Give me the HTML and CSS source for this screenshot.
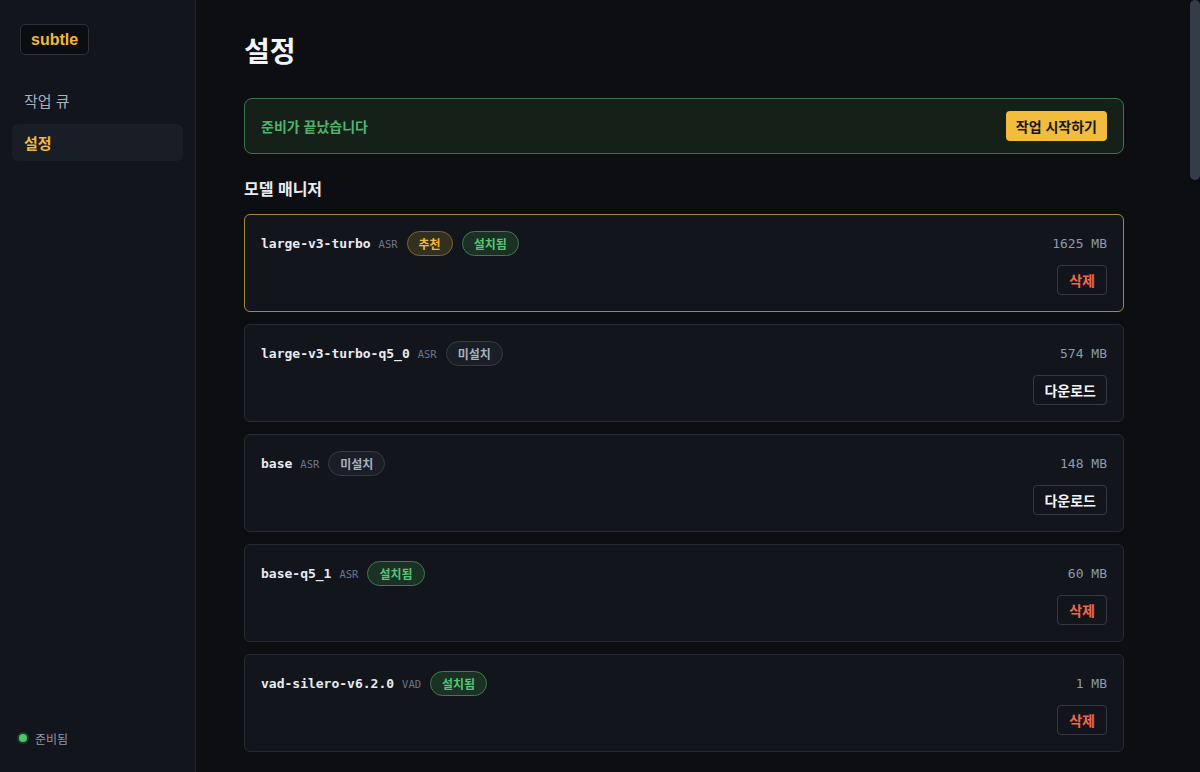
FILE: index.html
```html
<!DOCTYPE html>
<html lang="ko">
<head>
<meta charset="utf-8">
<title>subtle - 설정</title>
<link rel="stylesheet" href="styles.css">
</head>
<body>
<div class="app">
<aside class="sidebar">
  <div class="logo">subtle</div>
  <nav class="nav">
    <a class="nav-item">작업 큐</a>
    <a class="nav-item active">설정</a>
  </nav>
  <div class="status"><span class="dot"></span><span>준비됨</span></div>
</aside>
<main class="main">
  <div class="content">
    <h1 class="title">설정</h1>
    <div class="banner">
      <span class="banner-text">준비가 끝났습니다</span>
      <button class="btn-primary">작업 시작하기</button>
    </div>

    <h2 class="section-title">모델 매니저</h2>
    <div class="cards">
      <div class="card featured">
        <div class="card-left">
          <span class="model-name">large-v3-turbo</span><span class="model-kind">ASR</span>
          <span class="badge rec">추천</span><span class="badge ok">설치됨</span>
        </div>
        <div class="card-right">
          <span class="size">1625 MB</span>
          <button class="btn del">삭제</button>
        </div>
      </div>
      <div class="card">
        <div class="card-left">
          <span class="model-name">large-v3-turbo-q5_0</span><span class="model-kind">ASR</span>
          <span class="badge none">미설치</span>
        </div>
        <div class="card-right">
          <span class="size">574 MB</span>
          <button class="btn dl">다운로드</button>
        </div>
      </div>
      <div class="card">
        <div class="card-left">
          <span class="model-name">base</span><span class="model-kind">ASR</span>
          <span class="badge none">미설치</span>
        </div>
        <div class="card-right">
          <span class="size">148 MB</span>
          <button class="btn dl">다운로드</button>
        </div>
      </div>
      <div class="card">
        <div class="card-left">
          <span class="model-name">base-q5_1</span><span class="model-kind">ASR</span>
          <span class="badge ok">설치됨</span>
        </div>
        <div class="card-right">
          <span class="size">60 MB</span>
          <button class="btn del">삭제</button>
        </div>
      </div>
      <div class="card">
        <div class="card-left">
          <span class="model-name">vad-silero-v6.2.0</span><span class="model-kind">VAD</span>
          <span class="badge ok">설치됨</span>
        </div>
        <div class="card-right">
          <span class="size">1 MB</span>
          <button class="btn del">삭제</button>
        </div>
      </div>
    </div>

    <h2 class="section-title spaced">전사 설정</h2>
    <div class="panel">
      <div class="row"><span class="row-label">언어</span><span class="row-value">자동 감지</span></div>
      <div class="row"><span class="row-label">VAD 사용</span><span class="row-value">켜짐</span></div>
      <div class="row"><span class="row-label">스레드 수</span><span class="row-value">8</span></div>
      <div class="row"><span class="row-label">빔 크기</span><span class="row-value">5</span></div>
    </div>

    <h2 class="section-title spaced">출력 설정</h2>
    <div class="panel">
      <div class="row"><span class="row-label">자막 형식</span><span class="row-value">SRT</span></div>
      <div class="row"><span class="row-label">한 줄 최대 글자 수</span><span class="row-value">42</span></div>
      <div class="row"><span class="row-label">저장 위치</span><span class="row-value">원본과 같은 폴더</span></div>
    </div>

    <h2 class="section-title spaced">정보</h2>
    <div class="panel">
      <div class="row"><span class="row-label">버전</span><span class="row-value">0.4.2</span></div>
      <div class="row"><span class="row-label">엔진</span><span class="row-value">whisper.cpp</span></div>
    </div>
    <div class="spacer"></div>
  </div>
</main>
<div class="scroll-track"><div class="scroll-thumb"></div></div>
</div>
</body>
</html>
```

FILE: styles.css
```css
* { box-sizing: border-box; }
html, body { height: 100%; }
body {
  margin: 0;
  background: #0c0e12;
  color: #e6e9ef;
  font-family: "Liberation Sans", "Noto Sans CJK KR", sans-serif;
  overflow: hidden;
}
.app {
  position: relative;
  display: flex;
  height: 100vh;
}
.sidebar {
  flex: 0 0 196px;
  height: 100%;
  background: #12151c;
  border-right: 1px solid #22262e;
  padding: 24px 12px 0 12px;
  display: flex;
  flex-direction: column;
}
.logo {
  align-self: flex-start;
  margin-left: 8px;
  height: 31px;
  padding: 0 10px;
  display: flex;
  align-items: center;
  background: #0b0d11;
  border: 1px solid #2c313b;
  border-radius: 5px;
  color: #f0b93a;
  font-weight: 700;
  font-size: 16px;
}
.nav {
  margin-top: 27px;
  display: flex;
  flex-direction: column;
  gap: 5px;
}
.nav-item {
  height: 37px;
  display: flex;
  align-items: center;
  padding: 0 12px;
  border-radius: 6px;
  font-family: "Noto Sans CJK KR", sans-serif;
  font-size: 15px;
  color: #a7b1c2;
}
.nav-item.active {
  background: #191d26;
  color: #f0b93a;
  font-weight: 700;
}
.status {
  margin-top: auto;
  margin-bottom: 25px;
  padding-left: 7px;
  display: flex;
  align-items: center;
  gap: 8px;
  font-family: "Noto Sans CJK KR", sans-serif;
  font-size: 12px;
  color: #8d97a8;
  height: 18px;
}
.dot {
  width: 8px; height: 8px;
  border-radius: 50%;
  background: #4fc46c;
  box-shadow: 0 0 0 2px #1f3a28;
}
.main {
  flex: 1 1 auto;
  height: 100%;
  overflow-y: auto;
  scrollbar-width: none;
  padding: 32px 58px 48px 48px;
}
.main::-webkit-scrollbar { display: none; }
.scroll-track {
  position: absolute;
  top: 0;
  right: 0;
  width: 10px;
  height: 100%;
  background: #0c0e12;
}
.scroll-thumb {
  width: 10px;
  height: 180px;
  border-radius: 5px;
  background: #353c49;
}
.content { max-width: 880px; }
.title {
  margin: 0;
  font-family: "Noto Sans CJK KR", sans-serif;
  font-size: 28px;
  line-height: 36px;
  font-weight: 700;
  color: #f2f4f8;
}
.banner {
  margin-top: 30px;
  height: 56px;
  display: flex;
  align-items: center;
  justify-content: space-between;
  padding: 0 16px;
  background: #152019;
  border: 1px solid #3a7450;
  border-radius: 8px;
}
.banner-text {
  font-family: "Noto Sans CJK KR", sans-serif;
  font-size: 14px;
  font-weight: 700;
  color: #4fb36c;
}
.btn-primary {
  height: 30px;
  padding: 0 10px;
  border: none;
  border-radius: 4px;
  background: #f2bc3c;
  color: #15171c;
  font-family: "Noto Sans CJK KR", sans-serif;
  font-size: 14px;
  font-weight: 700;
}
.section-title {
  margin: 22px 0 14px 0;
  font-family: "Noto Sans CJK KR", sans-serif;
  font-size: 16px;
  line-height: 24px;
  font-weight: 700;
  color: #e9ecf1;
}
.section-title.spaced { margin-top: 36px; }
.cards {
  display: flex;
  flex-direction: column;
  gap: 12px;
}
.card {
  display: flex;
  justify-content: space-between;
  align-items: flex-start;
  padding: 16px;
  background: #12151c;
  border: 1px solid #262a33;
  border-radius: 6px;
  min-height: 98px;
}
.card.featured { border-color: #a9873a; }
.card-left {
  display: flex;
  align-items: center;
  height: 25px;
}
.model-name {
  font-family: "DejaVu Sans Mono", monospace;
  font-size: 13px;
  font-weight: 700;
  color: #e8ebf0;
}
.model-kind {
  margin-left: 8px;
  margin-right: 9px;
  font-family: "DejaVu Sans Mono", monospace;
  font-size: 10.5px;
  color: #6c768a;
}
.badge {
  height: 25px;
  display: inline-flex;
  align-items: center;
  padding: 0 11px;
  border-radius: 13px;
  border: 1px solid;
  font-family: "Noto Sans CJK KR", sans-serif;
  font-size: 12px;
  font-weight: 700;
  margin-right: 9px;
}
.badge.rec { background: #33301f; border-color: #7d6430; color: #f0bc3c; }
.badge.ok { background: #1a3123; border-color: #3d7a4f; color: #56c57a; }
.badge.none { background: #1a1e26; border-color: #363b45; color: #a9b0bc; }
.card-right {
  display: flex;
  flex-direction: column;
  align-items: flex-end;
  gap: 9px;
}
.size {
  height: 25px;
  line-height: 25px;
  font-family: "DejaVu Sans Mono", monospace;
  font-size: 13px;
  color: #8c9ab0;
}
.btn {
  height: 30px;
  padding: 0 10px;
  background: transparent;
  border: 1px solid #343a45;
  border-radius: 4px;
  font-family: "Noto Sans CJK KR", sans-serif;
  font-size: 14px;
  font-weight: 700;
}
.btn.del { color: #f2664a; padding: 0 11px; }
.btn.dl { color: #f2f4f8; }
.panel {
  background: #12151c;
  border: 1px solid #262a33;
  border-radius: 6px;
  padding: 4px 16px;
}
.row {
  display: flex;
  justify-content: space-between;
  align-items: center;
  height: 52px;
  border-bottom: 1px solid #20242c;
  font-family: "Noto Sans CJK KR", sans-serif;
  font-size: 14px;
}
.row:last-child { border-bottom: none; }
.row-label { color: #c9cfd9; }
.row-value { color: #8c9ab0; }
.spacer { height: 1200px; }
```
